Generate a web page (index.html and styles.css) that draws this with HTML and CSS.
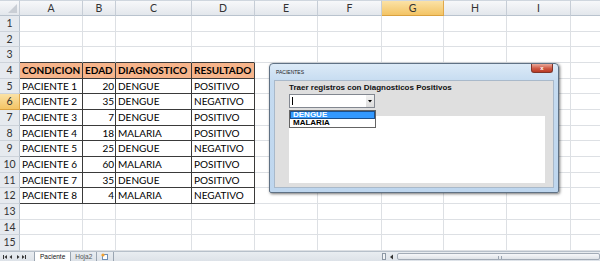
FILE: index.html
```html
<!DOCTYPE html>
<html lang="es">
<head>
    <meta charset="UTF-8">
    <title>Paciente - Excel</title>
    <link rel="stylesheet" href="styles.css">
</head>
<body>
    <div class="sheet">
        <table class="grid">
            <colgroup>
                <col style="width:20px"><col style="width:63px"><col style="width:33px"><col style="width:76px">
                <col style="width:63px"><col style="width:63px"><col style="width:64px"><col style="width:62px">
                <col style="width:63px"><col style="width:64px"><col style="width:64px">
            </colgroup>
            <tr class="colhead">
                <th class="corner"><span class="tri"></span></th>
                <th>A</th><th>B</th><th>C</th><th>D</th><th>E</th><th>F</th><th class="sel">G</th><th>H</th><th>I</th><th></th>
            </tr>
            <tr><th class="rh">1</th><td></td><td></td><td></td><td></td><td></td><td></td><td></td><td></td><td></td><td></td></tr>
            <tr><th class="rh">2</th><td></td><td></td><td></td><td></td><td></td><td></td><td></td><td></td><td></td><td></td></tr>
            <tr><th class="rh">3</th><td class="above"></td><td class="above"></td><td class="above"></td><td class="above"></td><td></td><td></td><td></td><td></td><td></td><td></td></tr>
            <tr><th class="rh">4</th><td class="t h">CONDICION</td><td class="t h">EDAD</td><td class="t h">DIAGNOSTICO</td><td class="t h">RESULTADO</td><td></td><td></td><td></td><td></td><td></td><td></td></tr>
            <tr><th class="rh">5</th><td class="t">PACIENTE 1</td><td class="t num">20</td><td class="t">DENGUE</td><td class="t">POSITIVO</td><td></td><td></td><td></td><td></td><td></td><td></td></tr>
            <tr><th class="rh sel">6</th><td class="t">PACIENTE 2</td><td class="t num">35</td><td class="t">DENGUE</td><td class="t">NEGATIVO</td><td></td><td></td><td></td><td></td><td></td><td></td></tr>
            <tr><th class="rh">7</th><td class="t">PACIENTE 3</td><td class="t num">7</td><td class="t">DENGUE</td><td class="t">POSITIVO</td><td></td><td></td><td></td><td></td><td></td><td></td></tr>
            <tr><th class="rh">8</th><td class="t">PACIENTE 4</td><td class="t num">18</td><td class="t">MALARIA</td><td class="t">POSITIVO</td><td></td><td></td><td></td><td></td><td></td><td></td></tr>
            <tr><th class="rh">9</th><td class="t">PACIENTE 5</td><td class="t num">25</td><td class="t">DENGUE</td><td class="t">NEGATIVO</td><td></td><td></td><td></td><td></td><td></td><td></td></tr>
            <tr><th class="rh">10</th><td class="t">PACIENTE 6</td><td class="t num">60</td><td class="t">MALARIA</td><td class="t">POSITIVO</td><td></td><td></td><td></td><td></td><td></td><td></td></tr>
            <tr><th class="rh">11</th><td class="t">PACIENTE 7</td><td class="t num">35</td><td class="t">DENGUE</td><td class="t">POSITIVO</td><td></td><td></td><td></td><td></td><td></td><td></td></tr>
            <tr><th class="rh">12</th><td class="t">PACIENTE 8</td><td class="t num">4</td><td class="t">MALARIA</td><td class="t">NEGATIVO</td><td></td><td></td><td></td><td></td><td></td><td></td></tr>
            <tr><th class="rh">13</th><td></td><td></td><td></td><td></td><td></td><td></td><td></td><td></td><td></td><td></td></tr>
            <tr><th class="rh">14</th><td></td><td></td><td></td><td></td><td></td><td></td><td></td><td></td><td></td><td></td></tr>
            <tr><th class="rh">15</th><td></td><td></td><td></td><td></td><td></td><td></td><td></td><td></td><td></td><td></td></tr>
        </table>
    </div>

    <div class="tabbar">
        <svg class="nav" width="28" height="8" viewBox="0 0 28 8">
            <rect x="2" y="2" width="1" height="4" fill="#333"/>
            <path d="M6 2 L3.5 4 L6 6 Z" fill="#333"/>
            <path d="M11 2 L8.5 4 L11 6 Z" fill="#333"/>
            <path d="M16 2 L18.5 4 L16 6 Z" fill="#333"/>
            <path d="M21 2 L23.5 4 L21 6 Z" fill="#333"/>
            <rect x="24" y="2" width="1" height="4" fill="#333"/>
        </svg>
        <div class="tab active">Paciente</div>
        <div class="tab">Hoja2</div>
        <div class="tab newtab">
            <svg width="8" height="7" viewBox="0 0 8 7">
                <rect x="1.5" y="1.5" width="5" height="5" fill="#fff" stroke="#6f8fb5"/>
                <circle cx="2" cy="2" r="1.6" fill="#f0a030"/>
            </svg>
        </div>
        <div class="tabfill"></div>
        <div class="split"></div>
        <div class="arrow">
            <svg width="5" height="6" viewBox="0 0 5 6"><path d="M4 0.5 L1 3 L4 5.5 Z" fill="#333"/></svg>
        </div>
        <div class="hscroll">
            <div class="thumb"><span class="grip"></span></div>
        </div>
    </div>

    <div class="dialog">
        <div class="titlebar">
            <span class="title">PACIENTES</span>
            <span class="close">x</span>
        </div>
        <div class="client">
            <div class="label">Traer registros con Diagnosticos Positivos</div>
            <div class="combo">
                <span class="caret"></span>
                <span class="drop">
                    <svg width="4" height="3" viewBox="0 0 4 3"><path d="M0 0 H4 L2 2.5 Z" fill="#000"/></svg>
                </span>
            </div>
            <div class="listbox"></div>
            <ul class="dropdown">
                <li class="picked">DENGUE</li>
                <li>MALARIA</li>
            </ul>
        </div>
    </div>
</body>
</html>
```

FILE: styles.css
```css
:root {
    --grid-line: #dde0e4;
    --table-line: #3a3a3a;
    --head-bg: #e6eaef;
    --head-line: #b9c3ce;
    --accent: #f6b48b;
}

* {
    box-sizing: border-box;
}

body {
    margin: 0;
    width: 600px;
    height: 261px;
    overflow: hidden;
    position: relative;
    background: #fff;
    font-family: Lato, 'Liberation Sans', sans-serif;
}

.sheet {
    height: 251px;
    overflow: hidden;
}

.grid {
    border-collapse: separate;
    border-spacing: 0;
    table-layout: fixed;
    width: 635px;
}

.grid tr {
    height: 16px;
}

.grid tr:nth-child(3n) {
    height: 15px;
}

.grid td {
    border-right: 1px solid var(--grid-line);
    border-bottom: 1px solid var(--grid-line);
    padding: 0 2px;
    font-size: 10px;
    line-height: 13px;
    color: #000;
    white-space: nowrap;
    overflow: hidden;
}

.grid th {
    padding: 0;
    font-weight: normal;
    font-size: 10.5px;
    line-height: 13px;
    color: #333;
    text-align: center;
}

.colhead th {
    background: linear-gradient(#f7f8fa, #e3e7ec);
    border-top: 1px solid #cfd6de;
    border-right: 1px solid #c6cdd6;
    border-bottom: 1px solid var(--head-line);
}

.corner {
    position: relative;
}

.corner .tri {
    position: absolute;
    right: 2px;
    bottom: 2px;
    width: 0;
    height: 0;
    border-left: 9px solid transparent;
    border-bottom: 9px solid #c9ced5;
}

.rh {
    background: var(--head-bg);
    border-right: 1px solid var(--head-line);
    border-bottom: 1px solid #cdd3da;
}

.grid th.sel {
    background: linear-gradient(#fbe2a6, #f3c465);
    border-right-color: #e0a84a;
    border-bottom-color: #d9a13f;
}

.grid td.above {
    border-bottom-color: var(--table-line);
}

.grid td.t {
    border-right-color: var(--table-line);
    border-bottom-color: var(--table-line);
}

.grid td.h {
    background: var(--accent);
    font-weight: bold;
}

.grid td.num {
    text-align: right;
    padding-right: 1px;
}

/* pestañas y barra de desplazamiento */
.tabbar {
    height: 10px;
    display: flex;
    align-items: stretch;
    background: linear-gradient(#e9edf1, #dde2e8);
    border-top: 1px solid #b7c0ca;
}

.nav {
    margin: 0 3px 0 1px;
    align-self: center;
}

.tab {
    font-family: 'Liberation Sans', sans-serif;
    font-size: 6.5px;
    line-height: 9px;
    padding: 0 4px;
    color: #555;
    border-right: 1px solid #9aa5b1;
}

.tab.active {
    background: #fff;
    color: #111;
    padding: 0 5px;
    margin-left: 2px;
    border-left: 1px solid #9aa5b1;
}

.newtab {
    padding: 1px 4px 0;
}

.tabfill {
    flex: 1;
}

.split {
    width: 4px;
    margin: 1px 2px;
    border: 1px solid #8d98a5;
    background: #f2f4f6;
}

.arrow {
    width: 7px;
    display: flex;
    align-items: center;
    justify-content: center;
}

.hscroll {
    width: 205px;
    padding: 1px 0 1px 2px;
}

.thumb {
    height: 100%;
    border: 1px solid #a2abb6;
    border-radius: 2px;
    background: linear-gradient(#f6f7f9, #dfe3e8);
    position: relative;
}

.grip {
    position: absolute;
    left: 100px;
    top: 2px;
    width: 4px;
    height: 3px;
    border-left: 1px solid #9aa4b0;
    border-right: 1px solid #9aa4b0;
}

/* formulario */
.dialog {
    position: absolute;
    left: 269px;
    top: 63px;
    width: 290px;
    height: 130px;
    padding: 0 4px 4px;
    display: flex;
    flex-direction: column;
    background: linear-gradient(#dceaf7, #c5dbf0 18px, #bed6ee);
    border: 1px solid #5f7184;
    border-radius: 4px 4px 2px 2px;
    box-shadow: 1px 1px 3px rgba(0,0,0,0.55);
}

.titlebar {
    height: 16px;
    display: flex;
    align-items: flex-start;
    justify-content: space-between;
}

.title {
    font-family: 'Liberation Sans', sans-serif;
    font-size: 5px;
    color: #222;
    margin: 5px 0 0 2px;
}

.close {
    width: 22px;
    height: 9px;
    margin-right: 1px;
    background: linear-gradient(#eaa99a, #cf5a45 55%, #b93a24);
    border: 1px solid #80352a;
    border-top: none;
    border-radius: 0 0 3px 3px;
    color: #fff;
    font-family: 'Liberation Sans', sans-serif;
    font-size: 6px;
    font-weight: bold;
    line-height: 8px;
    text-align: center;
}

.client {
    flex: 1;
    position: relative;
    background: #dfdfdf;
    border: 1px solid #a9b9ca;
    padding: 1px 0 0 14px;
    font-family: 'Liberation Sans', sans-serif;
}

.label {
    font-size: 8px;
    font-weight: bold;
    line-height: 11px;
    color: #111;
}

.combo {
    width: 86px;
    height: 14px;
    margin-top: 1px;
    background: #fff;
    border: 1px solid #828790;
    position: relative;
}

.caret {
    position: absolute;
    left: 2px;
    top: 2px;
    width: 1px;
    height: 8px;
    background: #000;
}

.drop {
    position: absolute;
    right: 0;
    top: 0;
    width: 8px;
    height: 12px;
    background: linear-gradient(#f2f2f2, #dcdcdc);
    display: flex;
    align-items: center;
    justify-content: center;
}

.listbox {
    width: 256px;
    height: 67px;
    margin-top: 8px;
    background: #fff;
}

.dropdown {
    position: absolute;
    left: 14px;
    top: 29px;
    width: 87px;
    margin: 0;
    padding: 0;
    list-style: none;
    background: #fff;
    border: 1px solid #646464;
}

.dropdown li {
    font-size: 8px;
    font-weight: bold;
    line-height: 8px;
    padding-left: 3px;
    color: #000;
}

.dropdown li.picked {
    background: #3399ff;
    color: #fff;
    outline: 1px solid #1b4f8c;
    outline-offset: -1px;
}
```
